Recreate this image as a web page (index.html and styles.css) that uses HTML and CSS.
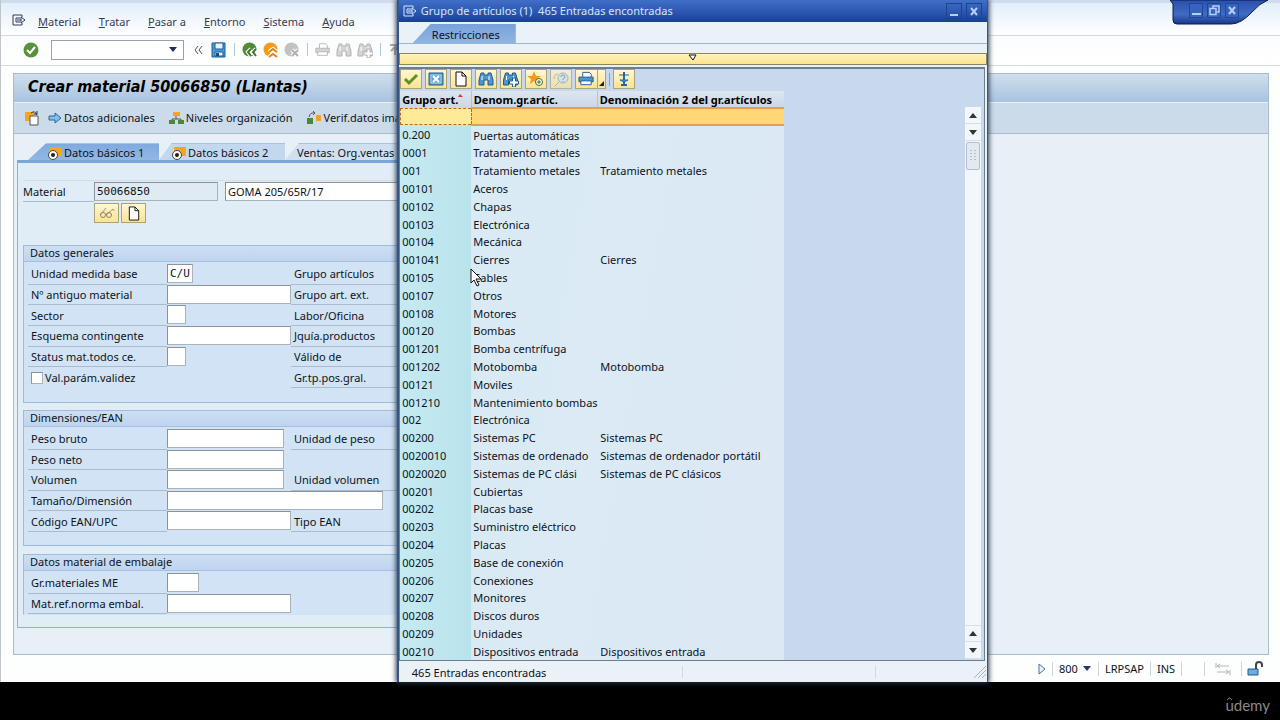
FILE: index.html
```html
<!DOCTYPE html>
<html lang="es">
<head>
<meta charset="utf-8">
<title>Crear material 50066850 (Llantas)</title>
<link rel="stylesheet" href="styles.css">
</head>
<body>
<svg class="sprite" aria-hidden="true">
  <symbol id="menu" viewBox="0 0 14 12"><path d="M10 3V1H1v10h9V9M8 4H4v4h4M5 6h4V3l4 3-4 3V6" fill="none" stroke="currentColor"/></symbol>
  <symbol id="binoc" viewBox="0 0 16 16"><path d="M3 2h3v2h4V2h3l2 7v5h-5v-5H6v5H1V9z" fill="currentColor" stroke="var(--edge)"/><path d="M4 5v4M11 5v4" stroke="#fff"/></symbol>
  <symbol id="plus" viewBox="0 0 16 16"><path d="M10 7h3v3h3v3h-3v3h-3v-3H7v-3h3z" fill="#fff" stroke="var(--edge)"/></symbol>
  <symbol id="printer" viewBox="0 0 18 16"><path d="M5 6V1h7l2 2v3" fill="#fff" stroke="var(--edge)"/><path d="M1 6h15v5H1z" fill="currentColor" stroke="var(--edge)"/><path d="M3 10h11v4H3z" fill="#fff" stroke="var(--edge)"/></symbol>
  <symbol id="page" viewBox="0 0 14 16"><path d="M2 1h6l4 4v10H2z" fill="#fff" stroke="#111"/><path d="M8 1v4h4" fill="none" stroke="#111"/></symbol>
  <symbol id="tabmark" viewBox="0 0 16 14"><path d="M3 1h12v9H3z" fill="#f8a51b"/><circle cx="6" cy="9" r="4.500" fill="#fff" stroke="#444"/><circle cx="6" cy="9" r="2" fill="#222"/></symbol>
</svg>
<div class="screen">
<main class="app">
  <nav class="menubar">
    <svg class="menu-icon" width="14" height="12"><use href="#menu"/></svg>
    <button><u>M</u>aterial</button><button><u>T</u>ratar</button><button><u>P</u>asar a</button><button><u>E</u>ntorno</button><button><u>S</u>istema</button><button><u>A</u>yuda</button>
  </nav>
  <div class="winctl">
    <svg width="110" height="26" viewBox="0 0 110 26"><defs><linearGradient id="wg" x2="0" y2="1"><stop stop-color="#2a50a8"/><stop offset=".6" stop-color="#3f6cc4"/><stop offset="1" stop-color="#17388a"/></linearGradient></defs><path d="M0 0h98q-8 3-16 12-11 12-21 12H7q-4 0-4-4V4z" fill="url(#wg)" stroke="#081a52"/><g fill="#3663bd" stroke="#224697"><path d="M19.500 3.500h13v14h-13zM37.500 3.500h13v14h-13zM55.500 3.500h13v14h-13z"/></g><path d="M22 14h9" stroke="#b7d0f7" stroke-width="2"/><path d="M43 8V6h6v6h-2M40 8.500h6v6h-6z" fill="none" stroke="#b7d0f7" stroke-width="1.500"/><path d="M59 7l6 7M65 7l-6 7" stroke="#b7d0f7" stroke-width="2"/></svg>
  </div>
  <div class="toolbar">
    <button class="ic ok" aria-label="Continuar"><svg width="16" height="16"><circle cx="8" cy="8" r="7.500" fill="#55923a"/><path d="M4 8l3 3 5-6" fill="none" stroke="#fff" stroke-width="2"/></svg></button>
    <span class="command"><input aria-label="Comando"><svg width="8" height="5"><path d="M0 0h8L4 5z" fill="#1e2f5e"/></svg></span>
    <button class="ic chev" aria-label="Ocultar"><svg width="10" height="10"><path d="M5 1L2 5l3 4M9 1L6 5l3 4" fill="none" stroke="#555"/></svg></button>
    <button class="ic save" aria-label="Grabar"><svg width="16" height="16"><path d="M1 1h13v14H1z" fill="#4b9bd2" stroke="#1d5c94"/><path d="M4 1h8v6H4zM4 10h8v4H4z" fill="#e4f4fc" stroke="#1d5c94"/><path d="M5 11h3v3H5z" fill="#174e81"/></svg></button>
    <i class="sep"></i>
    <button class="ic" aria-label="Atrás"><svg width="16" height="16"><circle cx="7.500" cy="7.500" r="7" fill="#4f8b38"/><path d="M9 7l-3 3 3 4M14 7l-3 3 3 4" fill="none" stroke="#fff" stroke-width="4"/><path d="M9 7l-3 3 3 4M14 7l-3 3 3 4" fill="none" stroke="#3d7429" stroke-width="2"/></svg></button>
    <button class="ic" aria-label="Finalizar"><svg width="16" height="16"><circle cx="7.500" cy="7.500" r="7" fill="#f59a18"/><path d="M6 10l4-3 4 3M6 15l4-3 4 3" fill="none" stroke="#fff" stroke-width="4"/><path d="M6 10l4-3 4 3M6 15l4-3 4 3" fill="none" stroke="#e28210" stroke-width="2"/></svg></button>
    <button class="ic" aria-label="Cancelar"><svg width="16" height="16"><circle cx="7.500" cy="7.500" r="7" fill="#c2c2c2"/><path d="M8 8l6 6M14 8l-6 6" stroke="#fff" stroke-width="4"/><path d="M8 8l6 6M14 8l-6 6" stroke="#b0b0b0" stroke-width="2"/></svg></button>
    <i class="sep"></i>
    <button class="ic dim" aria-label="Imprimir"><svg width="16" height="16"><use href="#printer"/></svg></button>
    <button class="ic dim" aria-label="Buscar"><svg width="16" height="16"><use href="#binoc"/></svg></button>
    <button class="ic dim" aria-label="Continuar búsqueda"><svg width="16" height="16"><use href="#binoc"/><use href="#plus"/></svg></button>
    <i class="sep"></i>
    <button class="ic dim" aria-label="Primera página"><svg width="16" height="16"><path d="M2 3h10M7 13V6M3 9l4-4 4 4" fill="none" stroke="#a9a9a9" stroke-width="2"/></svg></button>
  </div>
  <section class="frame">
    <h1>Crear material 50066850 (Llantas)</h1>
    <div class="actions">
      <button class="copy" aria-label="Copiar"><svg width="16" height="16"><path d="M1 2h9v9H1z" fill="#f8a51b"/><path d="M6 6h8v9H6z" fill="#fff" stroke="#555"/><path d="M7 3q4-3 6 2M10 4h3V1" fill="none" stroke="#333"/></svg></button>
      <button class="a1"><svg width="14" height="12"><path d="M1 4h6V1l6 5-6 5V8H1z" fill="#83bce8" stroke="#226ba5"/></svg>Datos adicionales</button>
      <button class="a2"><svg width="15" height="14"><path d="M7 5v3M3 10V8h9v2" fill="none" stroke="#555"/><path d="M4 1h7v4H4z" fill="#f5a326"/><path d="M0 9h6v4H0zM9 9h6v4H9z" fill="#4d8539"/></svg>Niveles organización</button>
      <button class="a3"><svg width="15" height="14"><path d="M2 6q1-5 6-4M6 0l2 2-2 2" fill="none" stroke="#555"/><path d="M0 7h6v6H0z" fill="#4d8539"/><path d="M9 4h5v6H9z" fill="#f5a326"/></svg>Verif.datos ima</button>
    </div>
    <div class="content">
      <div class="tabs">
        <button class="tab on"><svg width="16" height="14"><use href="#tabmark"/></svg>Datos básicos 1</button>
        <button class="tab two"><svg width="16" height="14"><use href="#tabmark"/></svg>Datos básicos 2</button>
        <button class="tab three">Ventas: Org.ventas</button>
      </div>
      <form class="sheet">
        <div class="material">
          <label for="mat">Material</label>
          <input id="mat" class="mono ro" value="50066850" readonly>
          <input class="name" aria-label="Denominación" value="GOMA 205/65R/17">
          <div class="mbtns">
            <button type="button" aria-label="Visualizar"><svg width="16" height="14"><path d="M1 9l6-7M7 9l7-6 1 2" fill="none" stroke="#a09678"/><circle cx="4" cy="9" r="2.500" fill="none" stroke="#8d8567"/><circle cx="10" cy="9" r="2.500" fill="none" stroke="#8d8567"/></svg></button>
            <button type="button" aria-label="Nuevo"><svg width="14" height="15"><use href="#page"/></svg></button>
          </div>
        </div>
        <section class="group g1">
          <h2>Datos generales</h2>
          <div class="rows r6">
            <label class="l" for="f1">Unidad medida base</label><input id="f1" class="mono w26" value="C/U"><span class="r">Grupo artículos</span>
            <label class="l" for="f2">Nº antiguo material</label><input id="f2" class="w124"><span class="r">Grupo art. ext.</span>
            <label class="l" for="f3">Sector</label><input id="f3" class="w19"><span class="r">Labor/Oficina</span>
            <label class="l" for="f4">Esquema contingente</label><input id="f4" class="w124"><span class="r">Jquía.productos</span>
            <label class="l" for="f5">Status mat.todos ce.</label><input id="f5" class="w19"><span class="r">Válido de</span>
            <label class="l check"><input type="checkbox">Val.parám.validez</label><span></span><span class="r">Gr.tp.pos.gral.</span>
          </div>
        </section>
        <section class="group g2">
          <h2>Dimensiones/EAN</h2>
          <div class="rows r5">
            <label class="l" for="d1">Peso bruto</label><input id="d1" class="w117"><span class="r">Unidad de peso</span>
            <label class="l" for="d2">Peso neto</label><input id="d2" class="w117"><span></span>
            <label class="l" for="d3">Volumen</label><input id="d3" class="w117"><span class="r">Unidad volumen</span>
            <label class="l" for="d4">Tamaño/Dimensión</label><input id="d4" class="w216">
            <label class="l" for="d5">Código EAN/UPC</label><input id="d5" class="w124"><span class="r">Tipo EAN</span>
          </div>
        </section>
        <section class="group g3">
          <h2>Datos material de embalaje</h2>
          <div class="rows r2">
            <label class="l" for="e1">Gr.materiales ME</label><input id="e1" class="w32"><span></span>
            <label class="l" for="e2">Mat.ref.norma embal.</label><input id="e2" class="w124"><span></span>
          </div>
        </section>
      </form>
    </div>
  </section>
  <footer class="status">
    <svg class="play" width="9" height="12"><path d="M1 1l6 5-6 5z" fill="#e8f2fc" stroke="#4a6ea5"/></svg>
    <span class="cell c1">800 <svg width="8" height="5"><path d="M0 0h8L4 5z" fill="#26366b"/></svg></span>
    <span class="cell c2">LRPSAP</span><span class="cell c3">INS</span><span class="cell c4"></span>
    <span class="cell c5"><svg width="16" height="14"><path d="M1 1v5M2 4h12M5 2L2 4l3 2M15 8v5M14 10H2M11 8l3 2-3 2" fill="none" stroke="#b5b5b5"/></svg></span>
    <span class="cell c6"><svg width="16" height="16"><path d="M9 8V4q0-3 3-3t3 3v2" fill="none" stroke="#444" stroke-width="2"/><path d="M1 8h10v6H1z" fill="#6daede" stroke="#1d5c94"/></svg></span>
  </footer>
</main>
<div class="brand"><svg width="7" height="4"><path d="M1 3l2-2h1l2 2" fill="none" stroke="#777"/></svg>udemy</div>

<section class="dialog" role="dialog" aria-labelledby="dt">
  <header><svg width="14" height="12"><use href="#menu"/></svg><span id="dt">Grupo de artículos (1)&nbsp; 465 Entradas encontradas</span>
    <button aria-label="Minimizar"><svg width="14" height="14"><path d="M3 11h8" stroke="#b7d0f7" stroke-width="2"/></svg></button><button aria-label="Cerrar"><svg width="14" height="14"><path d="M4 4l6 7M10 4l-6 7" stroke="#b7d0f7" stroke-width="2"/></svg></button>
  </header>
  <div class="dtabs"><button>Restricciones</button></div>
  <button class="fold" aria-label="Desplegar"><svg width="9" height="8"><path d="M1 1h7L5 6z" fill="#fff" stroke="#111"/></svg></button>
  <div class="results">
    <div class="dtools">
      <button aria-label="Aceptar"><svg width="16" height="16"><path d="M2 8l4 4 8-8" fill="none" stroke="#5f9226" stroke-width="3"/></svg></button>
      <button aria-label="Cancelar"><svg width="16" height="16"><path d="M1 2h14v12H1z" fill="#5ba4d8" stroke="#1d5c94"/><path d="M3 4h10v8H3z" fill="none" stroke="#a9d3ef"/><path d="M5 5l6 6M11 5l-6 6" stroke="#fff" stroke-width="2"/></svg></button>
      <button aria-label="Nueva selección"><svg width="14" height="16"><use href="#page"/></svg></button>
      <button aria-label="Buscar"><svg width="16" height="16"><use href="#binoc"/></svg></button>
      <button aria-label="Continuar búsqueda"><svg width="17" height="16"><use href="#binoc"/><use href="#plus"/></svg></button>
      <button aria-label="Añadir a favoritos"><svg width="17" height="16"><path d="M7 0l2 5h5l-4 3 1 5-4-3-4 3 1-5-4-3h5z" fill="#f59a18"/><circle cx="12" cy="11" r="3.500" fill="#fff" stroke="#4b6b2d"/><path d="M10 11h4M12 9v4" stroke="#4b6b2d"/></svg></button>
      <button class="off" aria-label="Ayuda"><svg width="16" height="16"><circle cx="10" cy="7" r="5" fill="#dce8e4" stroke="#8fa5a8"/><path d="M8 6q0-2 2-2t2 2q0 1-2 2v1M10 10v1" fill="none" stroke="#69868f"/><path d="M6 11l-4 4M1 8q0-5 4-5" fill="none" stroke="#c59f6b"/></svg></button>
      <button class="print" aria-label="Imprimir"><svg width="17" height="16"><use href="#printer"/></svg></button>
      <button class="drop" aria-label="Opciones de impresión"><svg width="5" height="5"><path d="M5 0v5H0z" fill="#222"/></svg></button>
      <i class="sep"></i>
      <button class="last" aria-label="Valores personales"><svg width="14" height="16"><path d="M7 1v13M4 14h6" stroke="#1d6ba2" stroke-width="2"/><path d="M2 4h10M3 9h8l-4 2z" fill="#5ba4d8" stroke="#1d6ba2"/></svg></button>
    </div>
    <div class="listarea">
      <table>
        <colgroup><col class="k"><col class="d"><col class="e"></colgroup>
        <thead><tr><th>Grupo art.<svg width="5" height="4"><path d="M0 3l2-3 3 3z" fill="#d33"/></svg></th><th>Denom.gr.artíc.</th><th>Denominación 2 del gr.artículos</th></tr></thead>
        <tbody>
          <tr class="filter"><td><input aria-label="Filtro grupo de artículos"></td><td></td><td></td></tr>
          <tr><td>0.200</td><td>Puertas automáticas</td><td></td></tr>
          <tr><td>0001</td><td>Tratamiento metales</td><td></td></tr>
          <tr><td>001</td><td>Tratamiento metales</td><td>Tratamiento metales</td></tr>
          <tr><td>00101</td><td>Aceros</td><td></td></tr>
          <tr><td>00102</td><td>Chapas</td><td></td></tr>
          <tr><td>00103</td><td>Electrónica</td><td></td></tr>
          <tr><td>00104</td><td>Mecánica</td><td></td></tr>
          <tr><td>001041</td><td>Cierres</td><td>Cierres</td></tr>
          <tr><td>00105</td><td>Cables</td><td></td></tr>
          <tr><td>00107</td><td>Otros</td><td></td></tr>
          <tr><td>00108</td><td>Motores</td><td></td></tr>
          <tr><td>00120</td><td>Bombas</td><td></td></tr>
          <tr><td>001201</td><td>Bomba centrífuga</td><td></td></tr>
          <tr><td>001202</td><td>Motobomba</td><td>Motobomba</td></tr>
          <tr><td>00121</td><td>Moviles</td><td></td></tr>
          <tr><td>001210</td><td>Mantenimiento bombas</td><td></td></tr>
          <tr><td>002</td><td>Electrónica</td><td></td></tr>
          <tr><td>00200</td><td>Sistemas PC</td><td>Sistemas PC</td></tr>
          <tr><td>0020010</td><td>Sistemas de ordenado</td><td>Sistemas de ordenador portátil</td></tr>
          <tr><td>0020020</td><td>Sistemas de PC clási</td><td>Sistemas de PC clásicos</td></tr>
          <tr><td>00201</td><td>Cubiertas</td><td></td></tr>
          <tr><td>00202</td><td>Placas base</td><td></td></tr>
          <tr><td>00203</td><td>Suministro eléctrico</td><td></td></tr>
          <tr><td>00204</td><td>Placas</td><td></td></tr>
          <tr><td>00205</td><td>Base de conexión</td><td></td></tr>
          <tr><td>00206</td><td>Conexiones</td><td></td></tr>
          <tr><td>00207</td><td>Monitores</td><td></td></tr>
          <tr><td>00208</td><td>Discos duros</td><td></td></tr>
          <tr><td>00209</td><td>Unidades</td><td></td></tr>
          <tr><td>00210</td><td>Dispositivos entrada</td><td>Dispositivos entrada</td></tr>
        </tbody>
      </table>
      <div class="scroll">
        <button aria-label="Arriba"><svg width="8" height="5"><path d="M0 5h8L4 0z" fill="#333"/></svg></button>
        <button aria-label="Abajo"><svg width="8" height="5"><path d="M0 0h8L4 5z" fill="#333"/></svg></button>
        <i class="thumb"><svg width="6" height="12"><path d="M1 0v12M5 0v12" stroke="#8d99a8" stroke-dasharray="1 2"/></svg></i>
        <button class="end" aria-label="Línea anterior"><svg width="8" height="5"><path d="M0 5h8L4 0z" fill="#333"/></svg></button>
        <button aria-label="Línea siguiente"><svg width="8" height="5"><path d="M0 0h8L4 5z" fill="#333"/></svg></button>
      </div>
    </div>
  </div>
  <footer><span class="count">465 Entradas encontradas</span><span class="fc"></span><span class="fc"></span><svg width="14" height="14"><path d="M1 13L13 1M5 13l8-8M9 13l4-4" stroke="#a8b3c0"/></svg></footer>
</section>
<svg class="pointer" width="12" height="19" viewBox="0 0 12 19"><path d="M1 1v14l3-3 3 6 2-1-3-6h5z" fill="#fff" stroke="#111"/></svg>
</div>
</body>
</html>
```
FILE: styles.css
```css
* { box-sizing: border-box; }
body { margin: 0; font: 11px/16px "Noto Sans", "DejaVu Sans", sans-serif; color: #0c131c; background: #000; }
button, input { font: inherit; color: inherit; margin: 0; padding: 0; border: 0; background: none; border-radius: 0; }
button { display: flex; align-items: center; white-space: nowrap; }
svg { flex: none; display: block; }
h1, h2 { margin: 0; }
.sprite { position: absolute; width: 0; height: 0; }
.screen { position: relative; min-height: 100vh; display: flex; flex-direction: column; overflow: hidden; }
.app { position: relative; flex: 1; display: flex; flex-direction: column; background: #fdfefe; border-left: 1px solid #bfc5ca; }
.menubar { height: 36px; padding: 6px 0 0 11px; display: flex; align-items: center; gap: 18px; border-top: 3px solid #cfdced; border-bottom: 1px solid #d5d9dd; background: linear-gradient(#e2eefa, #fff); color: #333c58; }
.menu-icon { margin: -4px -6px 0 0; }
.winctl { position: absolute; top: 0; right: 0; }
.toolbar { height: 30px; display: flex; align-items: center; padding: 0 0 2px 22px; gap: 5px; border-bottom: 1px solid #d5dadd; background: linear-gradient(#fafcfd, #fff); }
.command { display: flex; align-items: center; width: 133px; height: 20px; margin: 0 4px 0 7px; padding-right: 6px; border: 1px solid #9aa1a8; background: #fff; }
.command input { flex: 1; min-width: 0; }
.chev { margin-right: 3px; }
.sep { width: 1px; height: 13px; margin: 0 2px; background: #b4c6d8; }
.dim { color: #d4d4d4; --edge: #b3b3b3; }
.frame { flex: 1; margin: 7px 11px 0 12px; display: flex; flex-direction: column; border: 1px solid #a9bccd; background: #e8f0f7; }
.frame h1 { height: 28px; padding-left: 14px; font: italic bold 16px/25px "DejaVu Sans Condensed", "DejaVu Sans", sans-serif; color: #000; background: linear-gradient(#cfdeec, #a9c3e0); }
.actions { height: 32px; display: flex; align-items: center; padding-left: 10px; border-top: 1px solid #e8f0f8; border-bottom: 1px solid #a9bccd; background: #cbdbe9; }
.actions button { gap: 2px; }
.copy { margin-right: 8px; }
.a1 { margin-right: 14px; }
.a2 { margin-right: 14px; }
.content { width: 70%; padding: 9px 0 26px 3px; flex: 1; display: flex; flex-direction: column; }
.tabs { display: flex; height: 17px; padding-left: 11px; }
.tab { height: 17px; padding-top: 1px; background: #c3d8ee; gap: 1px; border-top: 1px solid #a9c3df; }
.tab.on { width: 131px; padding-left: 19px; background: linear-gradient(#80aade, #92b7e4); clip-path: polygon(14% 0, 100% 0, 100% 100%, 0 100%); }
.tab.two { width: 126px; padding-left: 12px; clip-path: polygon(10% 0, 100% 0, 100% 100%, 0 100%); }
.tab.three { width: 140px; padding-left: 12px; background: #d0e0f0; clip-path: polygon(10% 0, 100% 0, 100% 100%, 0 100%); }
.sheet { flex: 1; padding: 17px 6px 0 5px; border: 1px solid #8fb1d8; border-top: 3px solid #7ba6da; background: #e0ecf6; }
.sheet input { border: 1px solid #aab2ba; border-top-color: #8b9299; border-left-color: #8b9299; background: #fff; height: 19px; padding: 0 2px; }
.sheet .mono { font-family: "DejaVu Sans Mono", "Liberation Mono", monospace; }
.material { display: grid; grid-template-columns: 71px 124px 1fr; border-top: 1px solid #d2deea; margin-bottom: 22px; align-items: center; }
.material label { height: 21px; line-height: 22px; border-bottom: 1px solid #a9bccd; }
.material .ro { background: #e0eaf2; width: 124px; }
.material .name { margin-left: 7px; }
.mbtns { grid-column: 2; display: flex; gap: 2px; margin-top: 1px; }
.mbtns button, .dtools button { justify-content: center; border: 1px solid #aaa27d; background: linear-gradient(#fff7d3, #fbe391); }
.mbtns button { width: 25px; height: 20px; }
.group { border: 1px solid #9bbcdc; background: #d1e3f4; }
.group h2 { height: 16px; padding-left: 6px; font: inherit; line-height: 14px; border-bottom: 1px solid #a3c0e0; background: linear-gradient(#cddff2, #bed4ef); }
.g1 { padding-bottom: 14px; margin-bottom: 7px; }
.g2 { padding-bottom: 13px; margin-bottom: 8px; }
.g3 { border-bottom-color: #d1e3f4; }
.rows { display: grid; grid-template-columns: 139px 124px 1fr; grid-auto-rows: 1fr; padding: 2px 0 0 4px; align-items: stretch; }
.r6 { height: 126px; }
.r5 { height: 105px; }
.r2 { height: 43px; }
.l, .r { display: flex; align-items: center; padding: 1px 0 0 3px; border-bottom: 1px solid #a9bccd; white-space: nowrap; }
.check { border-bottom: 0; gap: 2px; }
.sheet .check input { appearance: none; width: 12px; height: 12px; }
.w19 { width: 19px; } .w26 { width: 26px; } .w32 { width: 32px; } .w117 { width: 117px; } .w124 { width: 124px; }
.w216 { width: 216px; grid-column: 2 / 4; }
.status { height: 27px; display: flex; align-items: center; justify-content: flex-end; padding-right: 17px; }
.play { margin-right: 5px; }
.cell { height: 14px; display: flex; align-items: center; gap: 5px; padding-left: 6px; border-left: 1px solid #ced4db; }
.c1 { width: 46px; } .c2 { width: 52px; } .c3 { width: 31px; } .c4 { width: 23px; }
.c5 { width: 37px; padding-left: 10px; }
.c6 { padding-left: 5px; }
.brand { height: 38px; padding: 8px 10px 0 0; display: flex; justify-content: flex-end; background: #000; color: #8a8a8a; font: 15px/30px Lato, sans-serif; }
.brand svg { margin: 7px -8px 0 0; }

.dialog { position: absolute; top: 0; bottom: 38px; left: 31%; width: 591px; display: flex; flex-direction: column; border: solid #34548c; border-width: 0 1px 0 2px; background: #eaf2f8; box-shadow: 0 0 5px 1px #26384f; }
.dialog > header { height: 22px; padding: 0 5px 1px 4px; display: flex; align-items: center; gap: 4px; color: #d8e4fa; background: linear-gradient(#3f6fc8, #2a55ae 60%, #17408f); }
.dialog > header span { flex: 1; }
.dialog > header button { border: 1px solid #1b4390; }
.dtabs { height: 22px; padding: 2px 0 0 13px; border-bottom: 1px solid #9fb7ca; background: #e9f2f8; }
.dtabs button { width: 104px; height: 20px; padding: 1px 0 0 20px; background: linear-gradient(#78a2da, #91b6e3); clip-path: polygon(18% 0, 100% 0, 100% 100%, 0 100%); }
.fold { height: 12px; margin: 9px 0 2px; justify-content: center; align-items: flex-start; border: 1px solid #8b8662; background: linear-gradient(#fff2b9, #fde48d); }
.results { flex: 1; display: flex; flex-direction: column; margin: 0 2px 0 0; border: 1px solid #6d7e91; border-top-width: 2px; background: #c8d9ed; }
.dtools { height: 22px; display: flex; align-items: flex-start; gap: 3px; color: #4d97cd; --edge: #1d5c94; }
.dtools button { width: 22px; height: 20px; overflow: hidden; }
.dtools .off { opacity: .7; }
.dtools .drop { width: 9px; margin-left: -3px; align-items: flex-end; padding-bottom: 2px; }
.dtools .print { border-right: 0; }
.dtools .sep { margin: 4px 0 0; background: #8ba3bd; }
.listarea { flex: 1; display: flex; justify-content: space-between; }
table { width: 384px; height: 100%; table-layout: fixed; border-collapse: collapse; background: linear-gradient(100deg, #d9ebf5, #dce8f4); }
.k { width: 71px; } .d { width: 126px; }
th, td { padding: 1px 2px 0; text-align: left; white-space: nowrap; line-height: 15px; height: 15px; }
th { background: linear-gradient(#dce6f0, #ccd7e4); border-right: 1px solid #b4c1d0; color: #000; }
th:last-child { border-right: 0; }
th svg { display: inline; vertical-align: 6px; }
td:last-child { padding-left: 3px; }
td:first-child { background: linear-gradient(90deg, #c6eaf1, #b9e3ec); }
.filter td { background: #fed877; border-top: 2px solid #e0a349; border-bottom: 2px solid #e0a349; }
.filter td:first-child { padding: 0; background: #ffea98; border: 1px dashed #b06a3c; }
.filter input { width: 100%; height: 14px; display: block; }
.scroll { width: 16px; margin: 16px 3px 1px 0; display: flex; flex-direction: column; align-items: center; background: #f2f7fb; }
.scroll button { width: 16px; height: 17px; justify-content: center; border-bottom: 1px solid #d5dfe9; }
.thumb { width: 14px; height: 28px; margin-top: 1px; display: flex; align-items: center; justify-content: center; border: 1px solid #b3bfce; border-radius: 2px; background: #e2e9f2; }
.scroll .end { margin-top: auto; border-top: 1px solid #d5dfe9; }
.dialog > footer { height: 21px; display: flex; align-items: center; padding-left: 13px; }
.count { flex: 0 0 270px; padding-top: 2px; }
.fc { flex: 2; height: 12px; border-left: 1px solid #d0dae3; }
.fc + .fc { flex: 1; }
.pointer { position: absolute; left: 470px; top: 268px; }
```
